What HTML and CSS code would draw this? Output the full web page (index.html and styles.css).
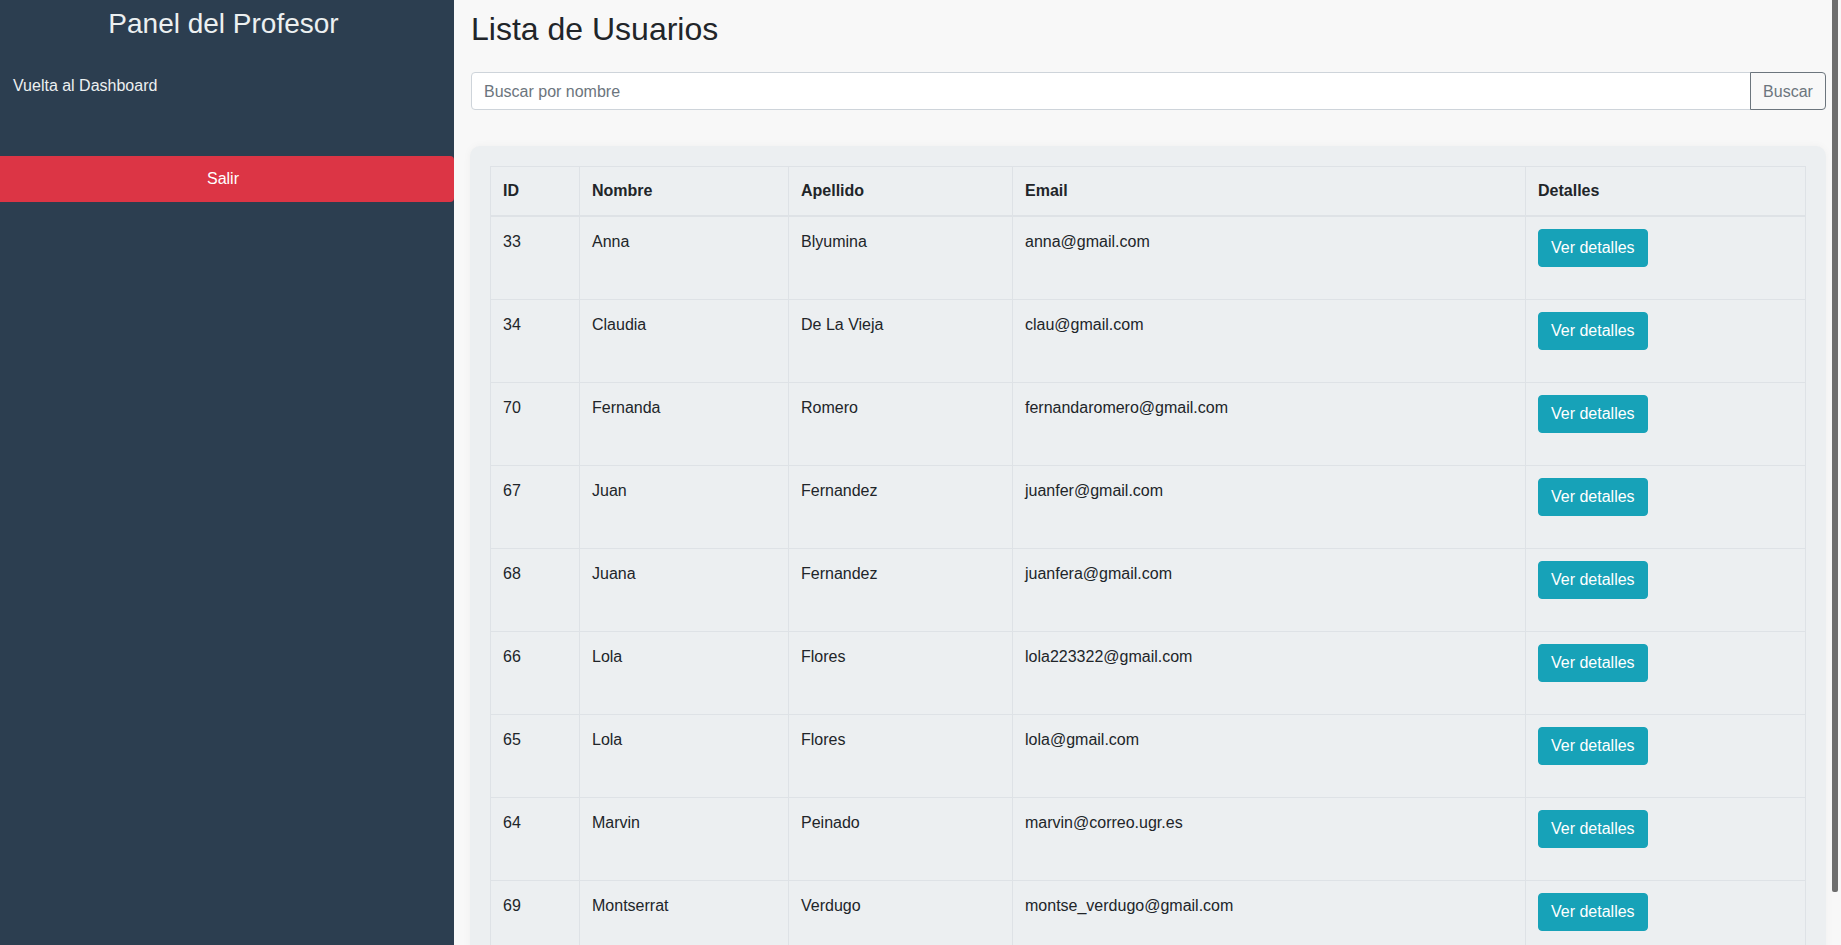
FILE: index.html
```html
<!DOCTYPE html>
<html lang="es">
<head>
<meta charset="utf-8">
<title>Lista de Usuarios</title>
<link rel="stylesheet" href="styles.css">
</head>
<body>
<div class="layout">
  <aside class="sidebar">
    <h3 class="sidebar-title">Panel del Profesor</h3>
    <a class="sidebar-link" href="#">Vuelta al Dashboard</a>
    <button class="btn-salir" type="button">Salir</button>
  </aside>
  <main class="main">
    <h2 class="page-title">Lista de Usuarios</h2>
    <form class="search-group">
      <input class="search-input" type="text" placeholder="Buscar por nombre">
      <button class="search-btn" type="button">Buscar</button>
    </form>
    <div class="card">
      <table class="users">
        <thead>
          <tr>
            <th class="c-id">ID</th>
            <th class="c-nombre">Nombre</th>
            <th class="c-apellido">Apellido</th>
            <th class="c-email">Email</th>
            <th class="c-det">Detalles</th>
          </tr>
        </thead>
        <tbody>
          <tr><td>33</td><td>Anna</td><td>Blyumina</td><td>anna@gmail.com</td><td><button class="btn-info" type="button">Ver detalles</button></td></tr>
          <tr><td>34</td><td>Claudia</td><td>De La Vieja</td><td>clau@gmail.com</td><td><button class="btn-info" type="button">Ver detalles</button></td></tr>
          <tr><td>70</td><td>Fernanda</td><td>Romero</td><td>fernandaromero@gmail.com</td><td><button class="btn-info" type="button">Ver detalles</button></td></tr>
          <tr><td>67</td><td>Juan</td><td>Fernandez</td><td>juanfer@gmail.com</td><td><button class="btn-info" type="button">Ver detalles</button></td></tr>
          <tr><td>68</td><td>Juana</td><td>Fernandez</td><td>juanfera@gmail.com</td><td><button class="btn-info" type="button">Ver detalles</button></td></tr>
          <tr><td>66</td><td>Lola</td><td>Flores</td><td>lola223322@gmail.com</td><td><button class="btn-info" type="button">Ver detalles</button></td></tr>
          <tr><td>65</td><td>Lola</td><td>Flores</td><td>lola@gmail.com</td><td><button class="btn-info" type="button">Ver detalles</button></td></tr>
          <tr><td>64</td><td>Marvin</td><td>Peinado</td><td>marvin@correo.ugr.es</td><td><button class="btn-info" type="button">Ver detalles</button></td></tr>
          <tr><td>69</td><td>Montserrat</td><td>Verdugo</td><td>montse_verdugo@gmail.com</td><td><button class="btn-info" type="button">Ver detalles</button></td></tr>
        </tbody>
      </table>
    </div>
  </main>
</div>
<div class="scroll-thumb" aria-hidden="true"></div>
</body>
</html>
```

FILE: styles.css
```css
html, body {
  margin: 0;
  padding: 0;
}
body {
  background: #f8f8f8;
  color: #212529;
  font-family: "Liberation Sans", Arial, sans-serif;
  font-size: 16px;
  line-height: 1.5;
}
.layout {
  display: flex;
  align-items: stretch;
  min-height: 100vh;
}
.sidebar {
  width: 454px;
  flex-shrink: 0;
  background: #2c3e50;
  color: #ecf0f1;
  padding-top: 7px;
  display: flex;
  flex-direction: column;
}
.sidebar-title {
  margin: 0;
  padding-right: 7px;
  font-size: 28px;
  font-weight: 400;
  line-height: 1.2;
  text-align: center;
  color: #ecf0f1;
}
.sidebar-link {
  margin: 33px 0 0 13px;
  color: #ecf0f1;
  text-decoration: none;
  font-size: 16px;
  line-height: 24px;
}
.btn-salir {
  margin-top: 58px;
  height: 46px;
  width: 454px;
  border: 0;
  border-radius: 0 4px 4px 0;
  background: #dc3545;
  color: #fff;
  font-family: inherit;
  font-size: 16px;
  line-height: 24px;
  padding: 0 8px 0 0;
}
.main {
  flex: 1;
  min-width: 0;
  padding: 10px 15px 17px 16px;
}
.page-title {
  margin: 0 0 24px 1px;
  font-size: 32px;
  font-weight: 400;
  line-height: 1.2;
}
.search-group {
  display: flex;
  margin: 0 0 36px 1px;
}
.search-input {
  flex: 1;
  height: 38px;
  box-sizing: border-box;
  border: 1px solid #ced4da;
  border-radius: 4px 0 0 4px;
  background: #fff;
  padding: 7px 12px 5px;
  font-family: inherit;
  font-size: 16px;
  color: #495057;
  outline: none;
}
.search-input::placeholder {
  color: #6c757d;
}
.search-btn {
  height: 38px;
  width: 76px;
  box-sizing: border-box;
  margin-left: -1px;
  border: 1px solid #6c757d;
  border-radius: 0 4px 4px 0;
  background: transparent;
  color: #6c757d;
  font-family: inherit;
  font-size: 16px;
  padding: 7px 12px 5px;
}
.card {
  background: #eceff1;
  border-radius: 10px;
  padding: 20px 21px 20px 20px;
  box-shadow: 0 0 8px rgba(0, 0, 0, 0.04);
}
.users {
  width: 100%;
  border-collapse: collapse;
  table-layout: fixed;
}
.users th,
.users td {
  box-sizing: border-box;
  border: 1px solid #dee2e6;
  text-align: left;
  vertical-align: top;
}
.users th {
  padding: 12px;
  font-weight: 700;
  border-bottom: 2px solid #dee2e6;
}
.users td {
  padding: 13px 12px 32px;
}
.c-id { width: 89px; }
.c-nombre { width: 209px; }
.c-apellido { width: 224px; }
.c-email { width: 513px; }
.c-det { width: 280px; }
.btn-info {
  display: inline-block;
  height: 38px;
  box-sizing: border-box;
  margin-top: -1px;
  padding: 6px 12px;
  border: 1px solid #17a2b8;
  border-radius: 4px;
  background: #17a2b8;
  color: #fff;
  font-family: inherit;
  font-size: 16px;
  line-height: 24px;
  vertical-align: top;
}
.scroll-thumb {
  position: fixed;
  top: 0;
  right: 3px;
  width: 6px;
  height: 892px;
  background: #6e6e6e;
  border-radius: 0 0 2px 2px;
}
```
